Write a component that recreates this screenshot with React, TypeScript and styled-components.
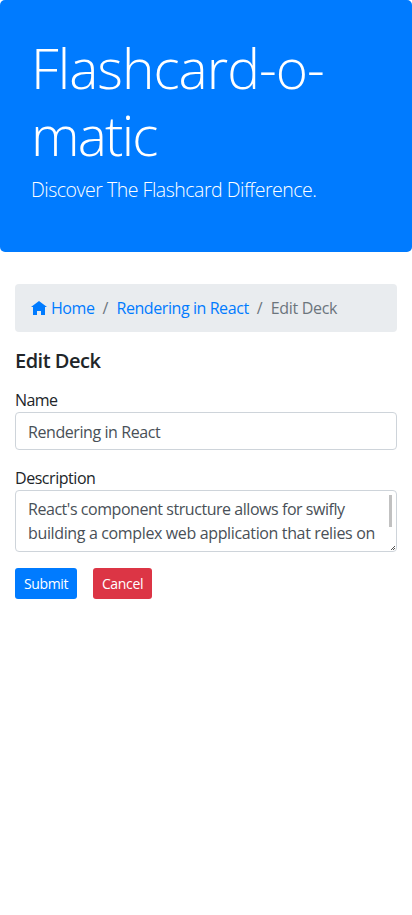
import React from "react";
import styled, { createGlobalStyle } from "styled-components";

const GlobalStyle = createGlobalStyle`
  *, *::before, *::after { box-sizing: border-box; }
  body {
    margin: 0;
    font-family: "Segoe UI", "Open Sans", "Noto Sans", sans-serif;
    font-size: 16px;
    line-height: 24px;
    color: #212529;
    background: #fff;
  }
`;

const Fit = styled.span<{ $spacing: number }>`
  letter-spacing: ${(p) => p.$spacing}px;
  white-space: nowrap;
`;

const Jumbotron = styled.header`
  height: 252px;
  padding: 34px 31px 32px;
  margin-bottom: 32px;
  border-radius: 5px;
  background: #007bff;
  color: #fff;
`;

const Title = styled.h1`
  display: flex;
  flex-direction: column;
  margin: 0 0 7px;
  font-size: 55px;
  font-weight: 300;
  line-height: 67px;
`;

const Lead = styled.p`
  margin: 0;
  font-size: 19.5px;
  font-weight: 300;
  line-height: 30px;
`;

const Container = styled.main`
  padding: 0 15px;
`;

const Breadcrumb = styled.nav`
  display: flex;
  height: 48px;
  padding: 12px 16px;
  margin-bottom: 17px;
  border-radius: 4px;
  background: #e9ecef;
`;

const Crumb = styled.a`
  display: flex;
  color: #007bff;
  text-decoration: none;
`;

const Separator = styled.span`
  width: 22px;
  text-align: center;
  color: #6c757d;
`;

const Current = styled.span`
  color: #6c757d;
`;

const HomeIcon = styled.svg`
  width: 16px;
  height: 16px;
  margin: 5px 4px 0 0;
  fill: currentColor;
`;

const Heading = styled.h2`
  margin: 0 0 15px;
  font-size: 20px;
  font-weight: 600;
  line-height: 24px;
`;

const Field = styled.div`
  display: flex;
  flex-direction: column;
  margin-bottom: 16px;
`;

const Label = styled.label`
  height: 24px;
`;

const Input = styled.input`
  height: 38px;
  padding: 7px 12px 5px;
  border: 1px solid #ced4da;
  border-radius: 4px;
  font: inherit;
  letter-spacing: -0.42px;
  color: #495057;
`;

const Textarea = styled.div`
  position: relative;
  display: flex;
  flex-direction: column;
  height: 62px;
  padding: 6px 12px;
  border: 1px solid #ced4da;
  border-radius: 4px;
  color: #495057;
`;

const ScrollThumb = styled.span`
  position: absolute;
  top: 4px;
  right: 4px;
  width: 3px;
  height: 32px;
  background: #c1c1c1;
`;

const ResizeGrip = styled.svg`
  position: absolute;
  right: 1px;
  bottom: 1px;
  width: 4px;
  height: 4px;
  fill: #555;
`;

const Buttons = styled.div`
  display: flex;
  gap: 16px;
`;

const Button = styled.button<{ $bg: string; $width: number }>`
  width: ${(p) => p.$width}px;
  height: 31px;
  padding: 1px 0 0;
  border: 0;
  border-radius: 3px;
  background: ${(p) => p.$bg};
  color: #fff;
  font: inherit;
  font-size: 14px;
  font-weight: 500;
  letter-spacing: -0.35px;
`;

export default function App() {
  return (
    <>
      <GlobalStyle />
      <Jumbotron>
        <Title>
          <Fit $spacing={-0.97}>Flashcard-o-</Fit>
          <Fit $spacing={-1.8}>matic</Fit>
        </Title>
        <Lead><Fit $spacing={-0.48}>Discover The Flashcard Difference.</Fit></Lead>
      </Jumbotron>
      <Container>
        <Breadcrumb>
          <Crumb href="#">
            <HomeIcon viewBox="0 0 8 8"><path d="M4 0l-4 3h1v4h2v-2h2v2h2v-4.03l1 .03-4-3z" /></HomeIcon>
            <Fit $spacing={-0.45}>Home</Fit>
          </Crumb>
          <Separator>/</Separator>
          <Crumb href="#"><Fit $spacing={-0.42}>Rendering in React</Fit></Crumb>
          <Separator>/</Separator>
          <Current><Fit $spacing={-0.3}>Edit Deck</Fit></Current>
        </Breadcrumb>
        <Heading><Fit $spacing={-0.5}>Edit Deck</Fit></Heading>
        <Field>
          <Label htmlFor="name"><Fit $spacing={-0.55}>Name</Fit></Label>
          <Input id="name" defaultValue="Rendering in React" />
        </Field>
        <Field>
          <Label><Fit $spacing={-0.45}>Description</Fit></Label>
          <Textarea role="textbox" aria-multiline="true">
            <Fit $spacing={-0.45}>React's component structure allows for swifly</Fit>
            <Fit $spacing={-0.36}>building a complex web application that relies on</Fit>
            <ScrollThumb />
            <ResizeGrip viewBox="0 0 4 4">
              <path d="M3 0h1v1H3zM2 1h1v1H2zM1 2h1v1H1zM0 3h1v1H0zM3 2h1v1H3zM2 3h1v1H2z" />
            </ResizeGrip>
          </Textarea>
        </Field>
        <Buttons>
          <Button $bg="#007bff" $width={62}>Submit</Button>
          <Button $bg="#dc3545" $width={59}>Cancel</Button>
        </Buttons>
      </Container>
    </>
  );
}
